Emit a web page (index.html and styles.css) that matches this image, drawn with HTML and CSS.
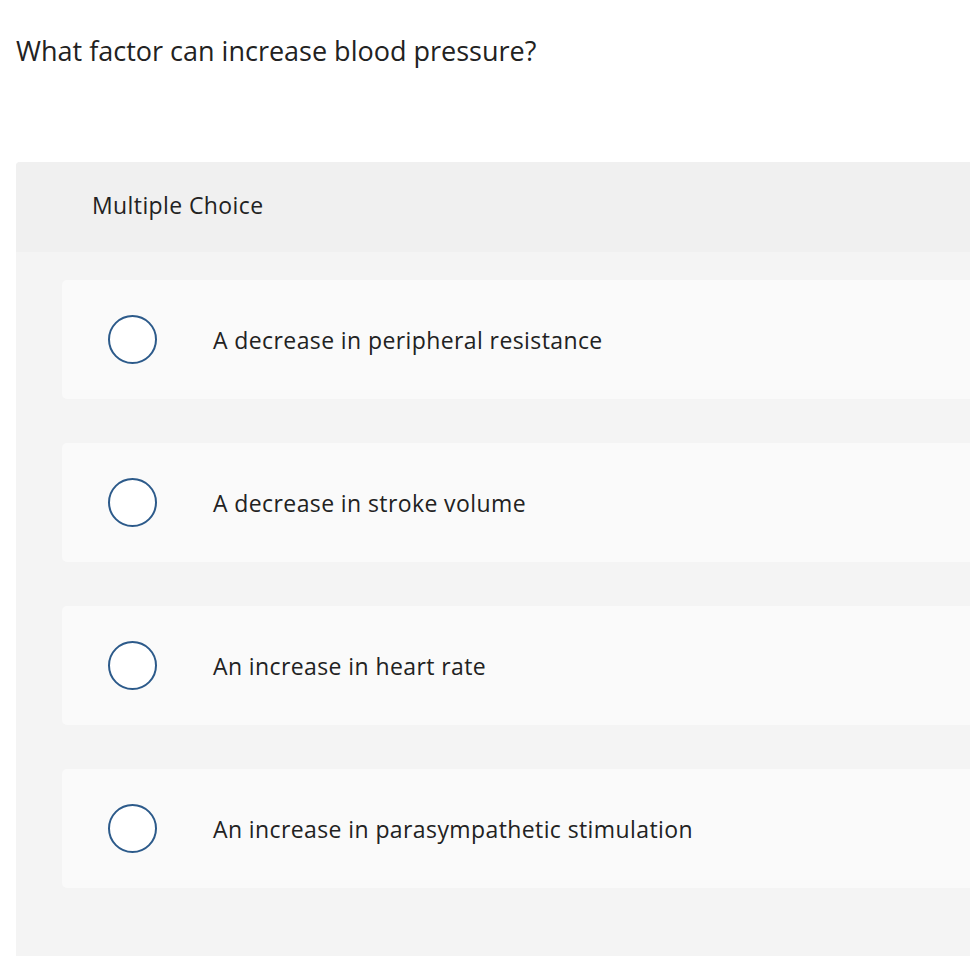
FILE: index.html
```html
<!DOCTYPE html>
<html>
<head>
<meta charset="utf-8">
<link rel="stylesheet" href="styles.css">
</head>
<body>
<div class="page">
  <h1 class="question">What factor can increase blood pressure?</h1>
  <div class="panel">
    <div class="panel-head">Multiple Choice</div>
    <div class="panel-body">
      <div class="option"><span class="radio"></span><span class="label">A decrease in peripheral resistance</span></div>
      <div class="option"><span class="radio"></span><span class="label">A decrease in stroke volume</span></div>
      <div class="option"><span class="radio"></span><span class="label">An increase in heart rate</span></div>
      <div class="option"><span class="radio"></span><span class="label">An increase in parasympathetic stimulation</span></div>
    </div>
  </div>
</div>
</body>
</html>
```
FILE: styles.css
```css
html, body {
  margin: 0;
  padding: 0;
  background: #ffffff;
  overflow: hidden;
}
body {
  font-family: "Open Sans", "Liberation Sans", sans-serif;
  color: #222222;
  width: 970px;
  height: 956px;
  overflow: hidden;
}
.page {
  padding: 0 0 0 16px;
}
.question {
  margin: 0;
  padding-top: 33px;
  font-size: 27px;
  line-height: 36px;
  font-weight: 400;
  height: 128px;
  box-sizing: border-box;
}
.panel {
  margin-top: 34px;
  width: 1100px;
  border-radius: 4px 0 0 0;
  overflow: hidden;
  background: #f4f4f4;
  min-height: 800px;
}
.panel-head {
  background: #f0f0f0;
  height: 90px;
  box-sizing: border-box;
  padding: 28px 0 0 76px;
  font-size: 23px;
  letter-spacing: 0.4px;
  line-height: 30px;
}
.panel-body {
  padding: 28px 0 0 46px;
  display: flex;
  flex-direction: column;
  gap: 44px;
}
.option {
  background: #fafafa;
  border-radius: 5px 0 0 5px;
  height: 119px;
  display: flex;
  align-items: center;
  padding-left: 46px;
}
.radio {
  width: 45px;
  height: 45px;
  border: 2px solid #2c5a8a;
  border-radius: 50%;
  background: #ffffff;
  flex: none;
}
.label {
  margin-left: 56px;
  font-size: 23px;
  letter-spacing: 0.4px;
  line-height: 30px;
}
```
